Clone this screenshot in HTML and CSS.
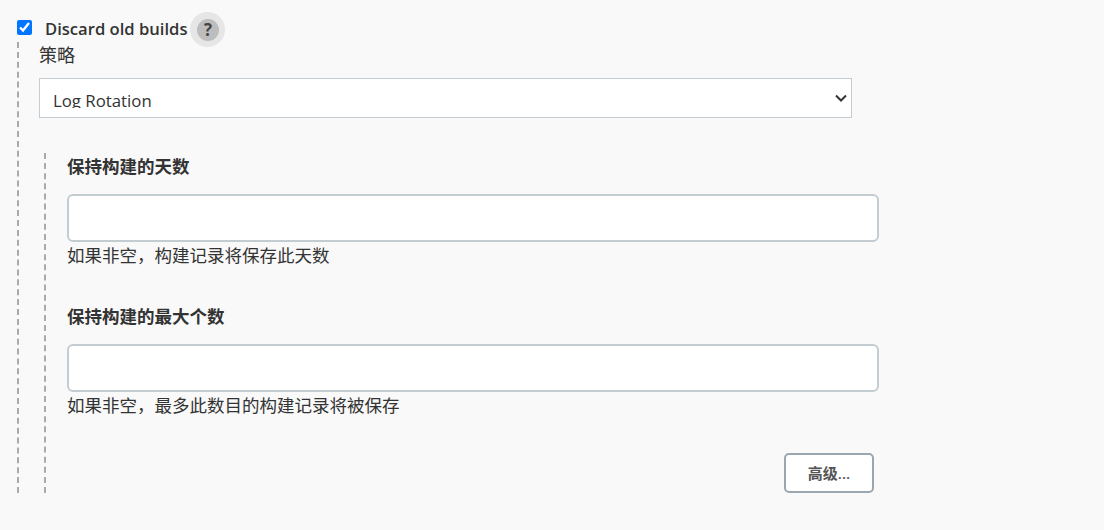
FILE: index.html
```html
<!DOCTYPE html>
<html lang="zh-CN">
<head>
  <meta charset="UTF-8">
  <meta name="viewport" content="width=device-width, initial-scale=1.0">
  <title>Discard old builds</title>
  <link rel="stylesheet" href="styles.css">
</head>
<body>
  <div class="optional-head">
    <input type="checkbox" id="discard" checked>
    <label for="discard">Discard old builds</label>
    <span class="help-btn"><span class="help-dot">?</span></span>
  </div>

  <section class="outer-block">
    <div class="strategy-label">策略</div>
    <div class="select-wrap">
      <select>
        <option>Log Rotation</option>
      </select>
      <svg class="chevron" width="14" height="10" viewBox="0 0 14 10">
        <path d="M2 2.5 L7 7.5 L12 2.5" fill="none" stroke="#333" stroke-width="2"/>
      </svg>
    </div>

    <div class="inner-block">
      <div class="field">
        <div class="field-title">保持构建的天数</div>
        <input type="text" class="text-box">
        <div class="field-help">如果非空，构建记录将保存此天数</div>
      </div>
      <div class="field second">
        <div class="field-title">保持构建的最大个数</div>
        <input type="text" class="text-box">
        <div class="field-help">如果非空，最多此数目的构建记录将被保存</div>
      </div>
      <div class="actions">
        <button type="button" class="advanced">高级...</button>
      </div>
    </div>
  </section>
</body>
</html>
```

FILE: styles.css
```css
body {
  margin: 0;
  padding: 12px 0 0 17px;
  background-color: #f9f9f9;
  color: #333;
  font-family: "Open Sans", "Noto Sans CJK SC", sans-serif;
  font-size: 16.5px;
}

/* Checkbox row */
.optional-head {
  display: flex;
  align-items: center;
  height: 35px;
}

.optional-head input {
  width: 15px;
  height: 15px;
  margin: 0 0 4px;
  accent-color: #0075ff;
}

.optional-head label {
  margin-left: 13px;
  padding-bottom: 2px;
  font-size: 16.6px;
  font-weight: 600;
  color: #333;
}

.help-btn {
  display: flex;
  align-items: center;
  justify-content: center;
  width: 35px;
  height: 35px;
  margin-left: 3px;
  border-radius: 50%;
  background-color: #e6e6e6;
}

.help-dot {
  width: 22px;
  height: 22px;
  line-height: 22px;
  border-radius: 50%;
  background-color: #bdbdbd;
  color: #444;
  font-size: 17px;
  font-weight: 700;
  text-align: center;
}

/* Dashed blocks */
.outer-block {
  width: 870px;
  height: 451px;
  margin-top: -5px;
  padding-left: 20px;
  border-left: 2px dashed #aaa;
  box-sizing: border-box;
}

.strategy-label {
  height: 24px;
  line-height: 24px;
  padding-top: 1px;
  font-size: 18px;
}

.select-wrap {
  position: relative;
  width: 813px;
  height: 40px;
  margin-top: 11px;
}

.select-wrap select {
  width: 100%;
  height: 100%;
  padding: 10px 13px 9px;
  border: 1px solid #c3ccd1;
  border-radius: 0;
  background-color: #fff;
  color: #333;
  font-family: inherit;
  font-size: 16.8px;
  appearance: none;
}

.chevron {
  position: absolute;
  right: 4px;
  top: 15px;
}

.inner-block {
  width: 835px;
  height: 340px;
  margin: 35px 0 0 5px;
  padding-left: 21px;
  border-left: 2px dashed #aaa;
  box-sizing: border-box;
}

/* Fields */
.field-title {
  height: 28px;
  line-height: 26px;
  font-size: 17.5px;
  font-weight: 700;
}

.text-box {
  display: block;
  width: 812px;
  height: 48px;
  margin-top: 13px;
  border: 2px solid #c3ccd1;
  border-radius: 6px;
  background-color: #fff;
  box-sizing: border-box;
}

.field-help {
  height: 28px;
  line-height: 26px;
  font-size: 17.5px;
}

.field.second {
  margin-top: 33px;
}

.actions {
  display: flex;
  justify-content: flex-end;
  width: 807px;
  margin-top: 33px;
}

.advanced {
  width: 90px;
  height: 40px;
  padding: 0 0 2px;
  border: 2px solid #9aa7b1;
  border-radius: 5px;
  background-color: #fff;
  color: #555;
  font-family: inherit;
  font-size: 15px;
  font-weight: 600;
}
```
